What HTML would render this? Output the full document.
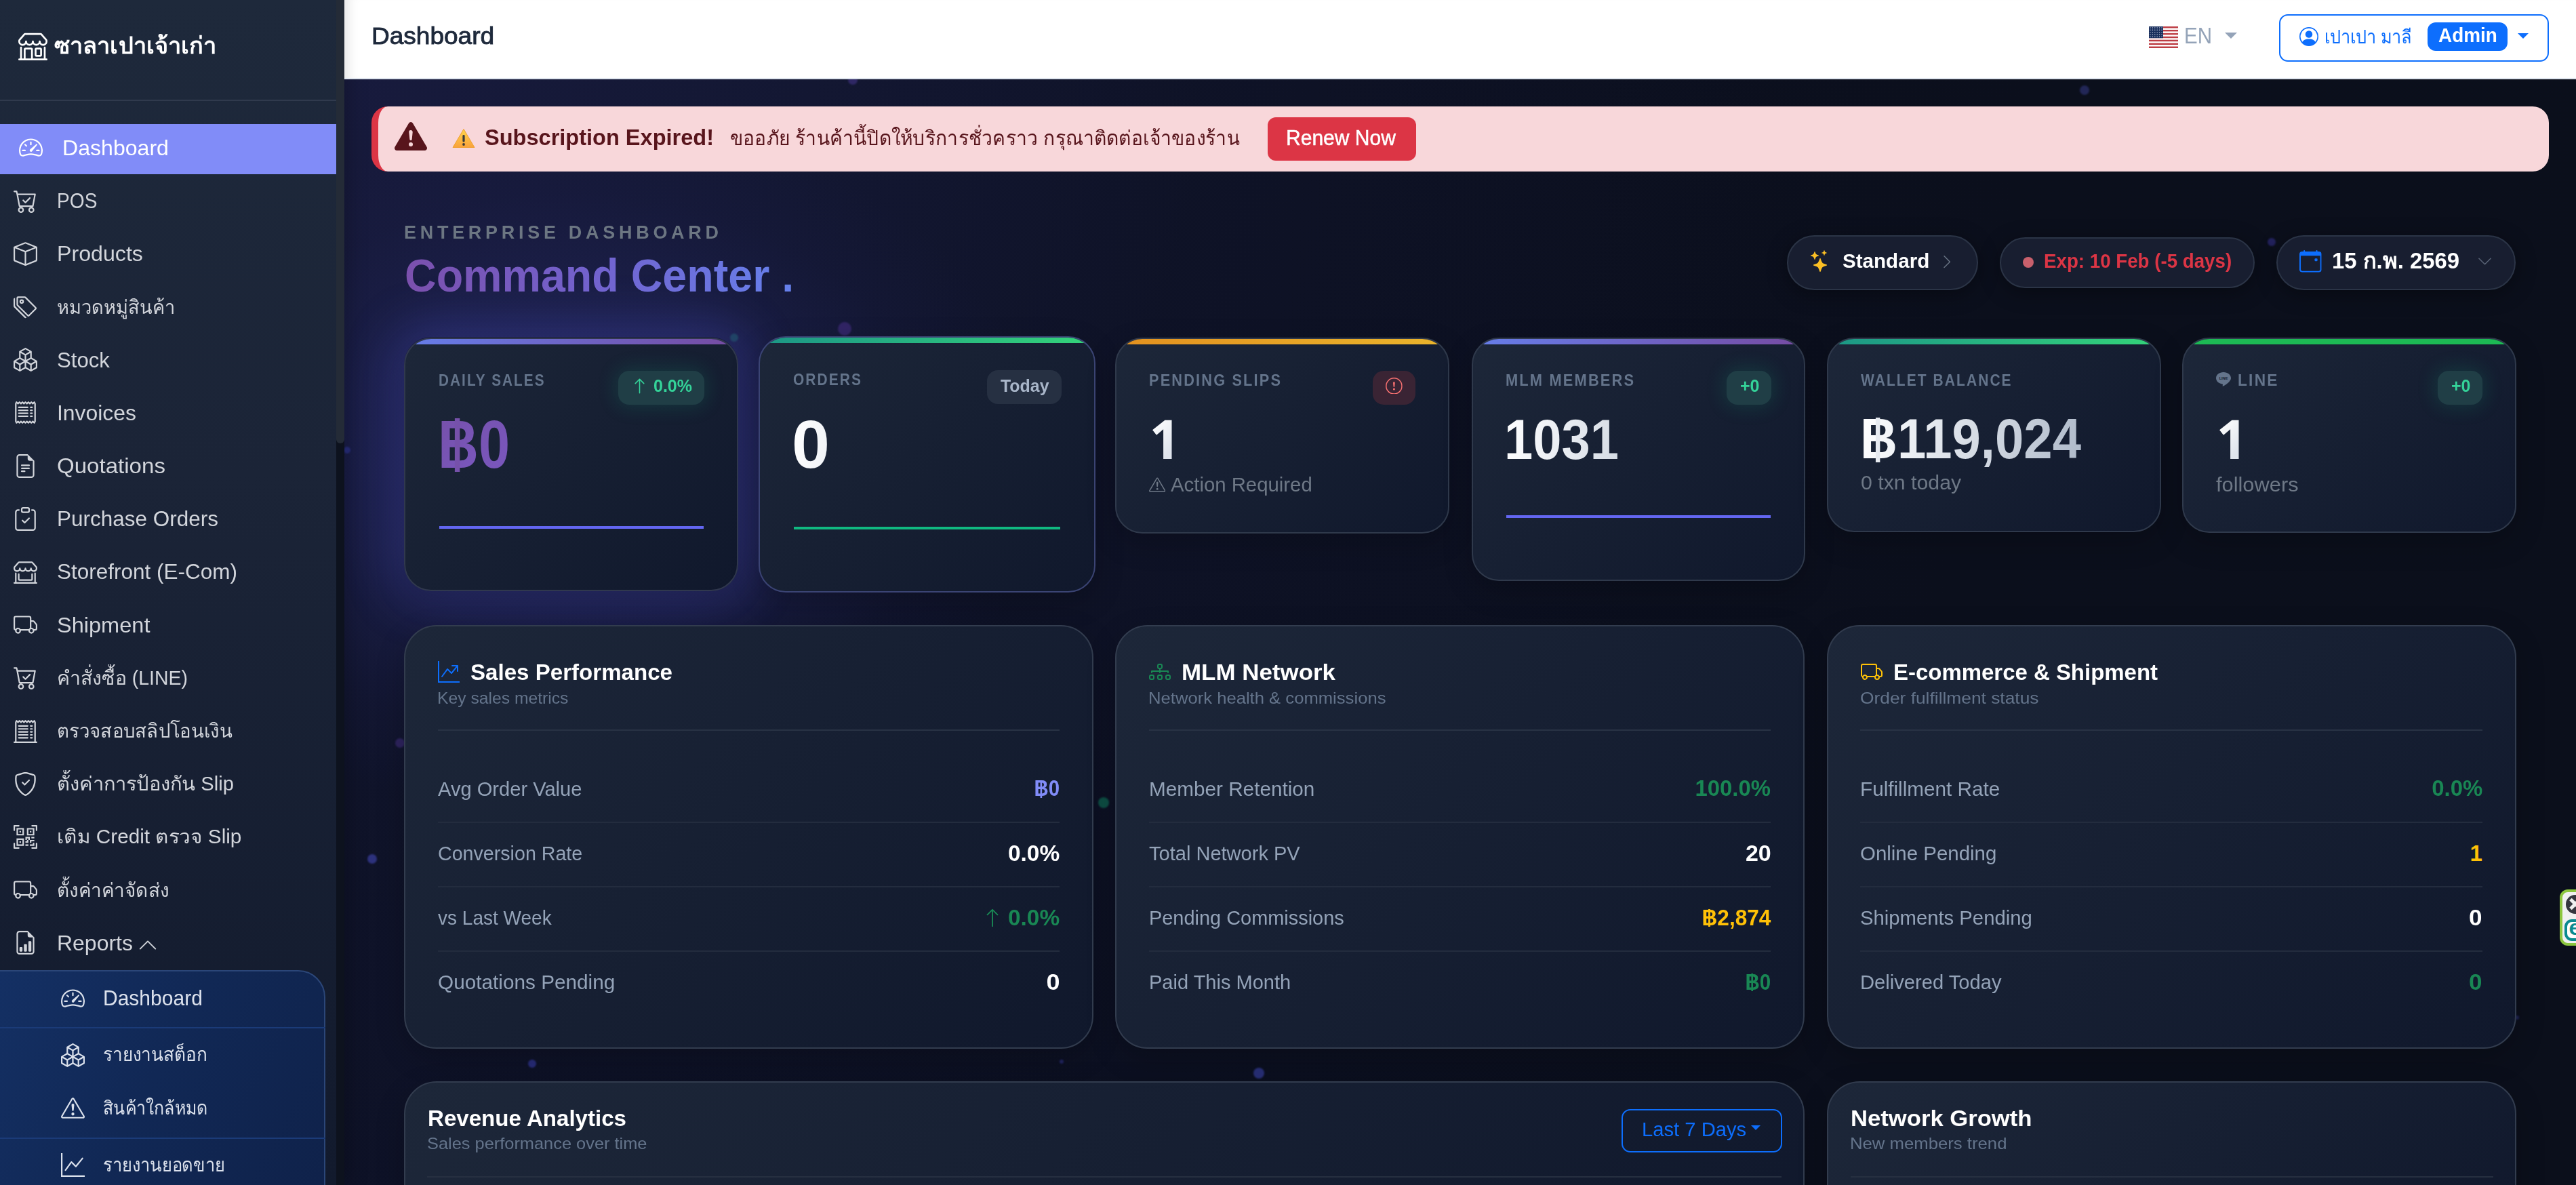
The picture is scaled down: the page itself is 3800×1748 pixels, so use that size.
<!DOCTYPE html>
<html lang="en"><head><meta charset="utf-8"><title>Dashboard</title>
<style>
*{box-sizing:border-box;margin:0;padding:0}
html,body{width:3800px;height:1748px;overflow:hidden;background:#0b0f1c;font-family:"Liberation Sans",sans-serif;color:#fff}
svg{display:block;fill:currentColor}
.abs{position:absolute}
/* ---------- main background ---------- */
#main{position:absolute;left:508px;top:0;width:3292px;height:1748px;overflow:hidden;
 background:radial-gradient(ellipse 700px 520px at 334px 690px,rgba(60,62,160,.30) 0%,rgba(52,54,140,.20) 50%,rgba(40,40,110,.08) 78%,rgba(30,30,84,0) 100%),radial-gradient(ellipse 2100px 1750px at 0% 8%,rgba(24,27,62,.96) 0%,rgba(21,25,55,.8) 30%,rgba(17,21,44,.5) 60%,rgba(11,15,27,0) 100%),linear-gradient(100deg,#0e1228 0%,#0c1021 40%,#0b0f1c 70%,#0b0f1b 100%)}
.dot{position:absolute;border-radius:50%;opacity:.7;filter:blur(1px)}
/* ---------- sidebar ---------- */
#side{position:absolute;left:0;top:0;width:508px;height:1748px;background:linear-gradient(180deg,#1e293b 0%,#1b2437 40%,#121a2d 100%);box-shadow:6px 0 28px rgba(0,0,0,.22);overflow:hidden}
#side .track{position:absolute;left:496px;top:0;width:12px;height:1748px;background:#0d121e}
#side .thumb{position:absolute;left:496px;top:-12px;width:12px;height:666px;border-radius:6px;background:#242b37}
#brand{position:absolute;left:27px;top:46px;height:42px;display:flex;align-items:center;color:#fff;font-weight:700;font-size:38px;white-space:nowrap}
#brand svg{width:43px;height:43px;margin-right:10px}
#side .hr{position:absolute;left:0;top:147px;width:496px;height:2px;background:#303a4d}
.nav{position:absolute;left:0;top:178.9px;width:496px}
.ni{position:relative;height:78.2px;display:flex;align-items:center;color:#d2d5db;font-size:32px;white-space:nowrap}
.ni svg{position:absolute;left:20px;top:50%;width:35px;height:35px;margin-top:-17.5px}
.ni span{position:absolute;left:83.5px;top:50%;line-height:40px;margin-top:-20px}
.ni.act{color:#fff}
.ni.act:before{content:"";position:absolute;left:0;top:4px;width:496px;bottom:0;background:#818cf8}
.ni.act svg{left:28px}
.ni.act span{left:91.5px}
#sub{position:absolute;left:-2px;top:1431px;width:482px;height:400px;border:2px solid #2b4678;border-top-right-radius:40px;background:linear-gradient(120deg,#143064 0%,#112855 45%,#0f2149 100%)}
.si{position:absolute;left:0;width:480px;height:78px;color:#dbe1ec;font-size:30.5px;white-space:nowrap}
.si svg{position:absolute;left:90px;top:50%;width:35px;height:35px;margin-top:-17.5px}
.si span{position:absolute;left:151.5px;top:50%;line-height:40px;margin-top:-20px}
.sl{position:absolute;left:0;width:480px;height:2px;background:#1b3b78}

/* ---------- text + cards ---------- */
.t{position:absolute;line-height:1;white-space:nowrap}
.card{background:linear-gradient(135deg,#1d2739 0%,#172033 45%,#10182c 100%);overflow:hidden;box-shadow:0 14px 44px rgba(0,0,0,.2)}
.card .bar{position:absolute;left:0;top:0;right:0;height:8px}
.baht{position:relative;display:inline-block}
.baht:before{content:"";position:absolute;left:41%;top:.125em;width:.09em;height:.79em;background:currentColor}
.v .baht{background:inherit;-webkit-background-clip:text;background-clip:text}
.v .baht:before{background:#e6eaf0}
.v.pv .baht:before{background:#7651aa}
#top{position:absolute;left:508px;top:0;width:3292px;height:117px;background:#fff;border-bottom:2px solid #dfe5ee;box-shadow:inset 18px 0 16px -12px rgba(0,0,0,.1)}
</style></head><body>
<svg width="0" height="0" style="position:absolute"><defs>
<symbol id="i-speed" viewBox="0 0 16 16"><path d="M8 4a.5.5 0 0 1 .5.5V6a.5.5 0 0 1-1 0V4.500A.5.5 0 0 1 8 4M3.732 5.732a.5.5 0 0 1 .707 0l.915.914a.5.5 0 1 1-.708.708l-.914-.915a.5.5 0 0 1 0-.707M2 10a.5.5 0 0 1 .5-.5h1.586a.5.5 0 0 1 0 1H2.500A.5.5 0 0 1 2 10m9.500 0a.5.5 0 0 1 .5-.5h1.500a.5.5 0 0 1 0 1H12a.5.5 0 0 1-.5-.5m.754-4.246a.39.39 0 0 0-.527-.020L7.547 9.310a.91.91 0 1 0 1.302 1.258l3.434-4.297a.39.39 0 0 0-.029-.518z"/><path fill-rule="evenodd" d="M0 10a8 8 0 1 1 15.547 2.661c-.442 1.253-1.845 1.602-2.932 1.250C11.309 13.488 9.475 13 8 13c-1.474 0-3.310.488-4.615.911-1.087.352-2.490.003-2.932-1.250A8 8 0 0 1 0 10m8-7a7 7 0 0 0-6.603 9.329c.203.575.923.876 1.680.630C4.397 12.533 6.358 12 8 12s3.604.532 4.923.960c.757.245 1.477-.056 1.680-.631A7 7 0 0 0 8 3"/></symbol>
<symbol id="i-cart" viewBox="0 0 16 16"><path d="M11.354 6.354a.5.5 0 0 0-.708-.708L8 8.293 6.854 7.146a.5.5 0 1 0-.708.708l1.500 1.500a.5.5 0 0 0 .708 0z"/><path d="M.5 1a.5.5 0 0 0 0 1h1.110l.401 1.607 1.498 7.985A.5.5 0 0 0 4 12h1a2 2 0 1 0 0 4 2 2 0 0 0 0-4h7a2 2 0 1 0 0 4 2 2 0 0 0 0-4h1a.5.5 0 0 0 .491-.408l1.500-8A.5.5 0 0 0 14.500 3H2.890l-.405-1.621A.5.5 0 0 0 2 1zm3.915 10L3.102 4h10.796l-1.313 7zM6 14a1 1 0 1 1-2 0 1 1 0 0 1 2 0m7 0a1 1 0 1 1-2 0 1 1 0 0 1 2 0"/></symbol>
<symbol id="i-box" viewBox="0 0 16 16"><path d="M8.186 1.113a.5.5 0 0 0-.372 0L1.846 3.500 8 5.961 14.154 3.500zM15 4.239l-6.500 2.600v7.922l6.500-2.600V4.240zM7.500 14.762V6.838L1 4.239v7.923zM7.443.184a1.500 1.500 0 0 1 1.114 0l7.129 2.852A.5.5 0 0 1 16 3.500v8.662a1 1 0 0 1-.629.928l-7.185 2.874a.5.5 0 0 1-.372 0L.630 13.090a1 1 0 0 1-.630-.928V3.500a.5.5 0 0 1 .314-.464z"/></symbol>
<symbol id="i-tags" viewBox="0 0 16 16"><path d="M3 2v4.586l7 7L14.586 9l-7-7zM2 2a1 1 0 0 1 1-1h4.586a1 1 0 0 1 .707.293l7 7a1 1 0 0 1 0 1.414l-4.586 4.586a1 1 0 0 1-1.414 0l-7-7A1 1 0 0 1 2 6.586z"/><path d="M5.500 5a.5.5 0 1 1 0-1 .5.5 0 0 1 0 1m0 1a1.500 1.500 0 1 0 0-3 1.500 1.500 0 0 0 0 3M1 7.086a1 1 0 0 0 .293.707L8.750 15.250l-.043.043a1 1 0 0 1-1.414 0l-7-7A1 1 0 0 1 0 7.586V3a1 1 0 0 1 1-1z"/></symbol>
<symbol id="i-boxes" viewBox="0 0 16 16"><path d="M7.752.066a.5.5 0 0 1 .496 0l3.750 2.143a.5.5 0 0 1 .252.434v3.995l3.498 2A.5.5 0 0 1 16 9.070v4.286a.5.5 0 0 1-.252.434l-3.750 2.143a.5.5 0 0 1-.496 0l-3.502-2-3.502 2.001a.5.5 0 0 1-.496 0l-3.750-2.143A.5.5 0 0 1 0 13.357V9.071a.5.5 0 0 1 .252-.434L3.750 6.638V2.643a.5.5 0 0 1 .252-.434zM4.250 7.504 1.508 9.071l2.742 1.567 2.742-1.567zM7.500 9.933l-2.750 1.571v3.134l2.750-1.571zm1 3.134 2.750 1.571v-3.134L8.500 9.933zm.508-3.996 2.742 1.567 2.742-1.567-2.742-1.567zm2.242-2.433V3.504L8.500 5.076V8.210zM7.500 8.210V5.076L4.750 3.504v3.134zM5.258 2.643 8 4.210l2.742-1.567L8 1.076zM15 9.933l-2.750 1.571v3.134L15 13.067zM3.750 14.638v-3.134L1 9.933v3.134z"/></symbol>
<symbol id="i-receipt" viewBox="0 0 16 16"><path d="M1.920.506a.5.5 0 0 1 .434.140L3 1.293l.646-.647a.5.5 0 0 1 .708 0L5 1.293l.646-.647a.5.5 0 0 1 .708 0L7 1.293l.646-.647a.5.5 0 0 1 .708 0L9 1.293l.646-.647a.5.5 0 0 1 .708 0l.646.647.646-.647a.5.5 0 0 1 .708 0l.646.647.646-.647a.5.5 0 0 1 .801.130l.5 1A.5.5 0 0 1 15 2v12a.5.5 0 0 1-.053.224l-.5 1a.5.5 0 0 1-.8.130L13 14.707l-.646.647a.5.5 0 0 1-.708 0L11 14.707l-.646.647a.5.5 0 0 1-.708 0L9 14.707l-.646.647a.5.5 0 0 1-.708 0L7 14.707l-.646.647a.5.5 0 0 1-.708 0L5 14.707l-.646.647a.5.5 0 0 1-.708 0L3 14.707l-.646.647a.5.5 0 0 1-.801-.130l-.5-1A.5.5 0 0 1 1 14V2a.5.5 0 0 1 .053-.224l.5-1a.5.5 0 0 1 .367-.270m.217 1.338L2 2.118v11.764l.137.274.510-.510a.5.5 0 0 1 .707 0l.646.647.646-.646a.5.5 0 0 1 .708 0l.646.646.646-.646a.5.5 0 0 1 .708 0l.646.646.646-.646a.5.5 0 0 1 .708 0l.646.646.646-.646a.5.5 0 0 1 .708 0l.646.646.646-.646a.5.5 0 0 1 .708 0l.509.509.137-.274V2.118l-.137-.274-.510.510a.5.5 0 0 1-.707 0L12 1.707l-.646.647a.5.5 0 0 1-.708 0L10 1.707l-.646.647a.5.5 0 0 1-.708 0L8 1.707l-.646.647a.5.5 0 0 1-.708 0L6 1.707l-.646.647a.5.5 0 0 1-.708 0L4 1.707l-.646.647a.5.5 0 0 1-.708 0z"/><path d="M3 4.500a.5.5 0 0 1 .5-.5h6a.5.5 0 1 1 0 1h-6a.5.5 0 0 1-.5-.5m0 2a.5.5 0 0 1 .5-.5h6a.5.5 0 1 1 0 1h-6a.5.5 0 0 1-.5-.5m0 2a.5.5 0 0 1 .5-.5h6a.5.5 0 1 1 0 1h-6a.5.5 0 0 1-.5-.5m0 2a.5.5 0 0 1 .5-.5h6a.5.5 0 0 1 0 1h-6a.5.5 0 0 1-.5-.5m8-6a.5.5 0 0 1 .5-.5h1a.5.5 0 0 1 0 1h-1a.5.5 0 0 1-.5-.5m0 2a.5.5 0 0 1 .5-.5h1a.5.5 0 0 1 0 1h-1a.5.5 0 0 1-.5-.5m0 2a.5.5 0 0 1 .5-.5h1a.5.5 0 0 1 0 1h-1a.5.5 0 0 1-.5-.5m0 2a.5.5 0 0 1 .5-.5h1a.5.5 0 0 1 0 1h-1a.5.5 0 0 1-.5-.5"/></symbol>
<symbol id="i-rcut" viewBox="0 0 16 16"><path d="M3 4.500a.5.5 0 0 1 .5-.5h6a.5.5 0 1 1 0 1h-6a.5.5 0 0 1-.5-.5m0 2a.5.5 0 0 1 .5-.5h6a.5.5 0 1 1 0 1h-6a.5.5 0 0 1-.5-.5m0 2a.5.5 0 0 1 .5-.5h6a.5.5 0 1 1 0 1h-6a.5.5 0 0 1-.5-.5m0 2a.5.5 0 0 1 .5-.5h6a.5.5 0 0 1 0 1h-6a.5.5 0 0 1-.5-.5m0 2a.5.5 0 0 1 .5-.5h6a.5.5 0 0 1 0 1h-6a.5.5 0 0 1-.5-.5M11.500 4a.5.5 0 0 0 0 1h1a.5.5 0 0 0 0-1zm0 2a.5.5 0 0 0 0 1h1a.5.5 0 0 0 0-1zm0 2a.5.5 0 0 0 0 1h1a.5.5 0 0 0 0-1zm0 2a.5.5 0 0 0 0 1h1a.5.5 0 0 0 0-1zm0 2a.5.5 0 0 0 0 1h1a.5.5 0 0 0 0-1z"/><path d="M2.354.646a.5.5 0 0 0-.801.130l-.5 1A.5.5 0 0 0 1 2v13H.5a.5.5 0 0 0 0 1h15a.5.5 0 0 0 0-1H15V2a.5.5 0 0 0-.053-.224l-.5-1a.5.5 0 0 0-.8-.130L13 1.293l-.646-.647a.5.5 0 0 0-.708 0L11 1.293l-.646-.647a.5.5 0 0 0-.708 0L9 1.293 8.354.646a.5.5 0 0 0-.708 0L7 1.293 6.354.646a.5.5 0 0 0-.708 0L5 1.293 4.354.646a.5.5 0 0 0-.708 0L3 1.293zm-.217 1.198.510.510a.5.5 0 0 0 .707 0L4 1.707l.646.647a.5.5 0 0 0 .708 0L6 1.707l.646.647a.5.5 0 0 0 .708 0L8 1.707l.646.647a.5.5 0 0 0 .708 0L10 1.707l.646.647a.5.5 0 0 0 .708 0L12 1.707l.646.647a.5.5 0 0 0 .708 0l.509-.510.137.274V15H2V2.118z"/></symbol>
<symbol id="i-file" viewBox="0 0 16 16"><path d="M5.500 7a.5.5 0 0 0 0 1h5a.5.5 0 0 0 0-1zM5 9.500a.5.5 0 0 1 .5-.5h5a.5.5 0 0 1 0 1h-5a.5.5 0 0 1-.5-.5m0 2a.5.5 0 0 1 .5-.5h2a.5.5 0 0 1 0 1h-2a.5.5 0 0 1-.5-.5"/><path d="M9.500 0H4a2 2 0 0 0-2 2v12a2 2 0 0 0 2 2h8a2 2 0 0 0 2-2V4.500zm0 1v2A1.500 1.500 0 0 0 11 4.500h2V14a1 1 0 0 1-1 1H4a1 1 0 0 1-1-1V2a1 1 0 0 1 1-1z"/></symbol>
<symbol id="i-clip" viewBox="0 0 16 16"><path fill-rule="evenodd" d="M10.854 7.146a.5.5 0 0 1 0 .708l-3 3a.5.5 0 0 1-.708 0l-1.500-1.500a.5.5 0 1 1 .708-.708L7.500 9.793l2.646-2.647a.5.5 0 0 1 .708 0"/><path d="M4 1.500H3a2 2 0 0 0-2 2V14a2 2 0 0 0 2 2h10a2 2 0 0 0 2-2V3.500a2 2 0 0 0-2-2h-1v1h1a1 1 0 0 1 1 1V14a1 1 0 0 1-1 1H3a1 1 0 0 1-1-1V3.500a1 1 0 0 1 1-1h1z"/><path d="M9.500 1a.5.5 0 0 1 .5.5v1a.5.5 0 0 1-.5.5h-3a.5.5 0 0 1-.5-.5v-1a.5.5 0 0 1 .5-.5zm-3-1A1.500 1.500 0 0 0 5 1.500v1A1.500 1.500 0 0 0 6.500 4h3A1.500 1.500 0 0 0 11 2.500v-1A1.500 1.500 0 0 0 9.500 0z"/></symbol>
<symbol id="i-shop" viewBox="0 0 16 16"><path d="M2.970 1.350A1 1 0 0 1 3.730 1h8.540a1 1 0 0 1 .760.350l2.609 3.044A1.500 1.500 0 0 1 16 5.370v.255a2.375 2.375 0 0 1-4.250 1.458A2.370 2.370 0 0 1 9.875 8 2.370 2.370 0 0 1 8 7.083 2.370 2.370 0 0 1 6.125 8a2.370 2.370 0 0 1-1.875-.917A2.375 2.375 0 0 1 0 5.625V5.370a1.500 1.500 0 0 1 .361-.976zm1.780 4.275a1.375 1.375 0 0 0 2.750 0 .5.5 0 0 1 1 0 1.375 1.375 0 0 0 2.750 0 .5.5 0 0 1 1 0 1.375 1.375 0 1 0 2.750 0V5.370a.5.5 0 0 0-.120-.325L12.270 2H3.730L1.120 5.045A.5.5 0 0 0 1 5.370v.255a1.375 1.375 0 0 0 2.750 0 .5.5 0 0 1 1 0M1.500 8.500A.5.5 0 0 1 2 9v6h1v-5a1 1 0 0 1 1-1h3a1 1 0 0 1 1 1v5h6V9a.5.5 0 0 1 1 0v6h.5a.5.5 0 0 1 0 1H.5a.5.5 0 0 1 0-1H1V9a.5.5 0 0 1 .5-.5M4 15h3v-5H4zm5-5a1 1 0 0 1 1-1h2a1 1 0 0 1 1 1v3a1 1 0 0 1-1 1h-2a1 1 0 0 1-1-1zm3 0h-2v3h2z"/></symbol>
<symbol id="i-shopw" viewBox="0 0 16 16"><path d="M2.970 1.350A1 1 0 0 1 3.730 1h8.540a1 1 0 0 1 .760.350l2.609 3.044A1.500 1.500 0 0 1 16 5.370v.255a2.375 2.375 0 0 1-4.250 1.458A2.370 2.370 0 0 1 9.875 8 2.370 2.370 0 0 1 8 7.083 2.370 2.370 0 0 1 6.125 8a2.370 2.370 0 0 1-1.875-.917A2.375 2.375 0 0 1 0 5.625V5.370a1.500 1.500 0 0 1 .361-.976zm1.780 4.275a1.375 1.375 0 0 0 2.750 0 .5.5 0 0 1 1 0 1.375 1.375 0 0 0 2.750 0 .5.5 0 0 1 1 0 1.375 1.375 0 1 0 2.750 0V5.370a.5.5 0 0 0-.120-.325L12.270 2H3.730L1.120 5.045A.5.5 0 0 0 1 5.370v.255a1.375 1.375 0 0 0 2.750 0 .5.5 0 0 1 1 0M1.500 8.500A.5.5 0 0 1 2 9v6h12V9a.5.5 0 0 1 1 0v6h.5a.5.5 0 0 1 0 1H.5a.5.5 0 0 1 0-1H1V9a.5.5 0 0 1 .5-.5m2 .5a.5.5 0 0 1 .5.5V13h8V9.500a.5.5 0 0 1 1 0V13a1 1 0 0 1-1 1H4a1 1 0 0 1-1-1V9.500a.5.5 0 0 1 .5-.5"/></symbol>
<symbol id="i-truck" viewBox="0 0 16 16"><path d="M0 3.500A1.500 1.500 0 0 1 1.500 2h9A1.500 1.500 0 0 1 12 3.500V5h1.020a1.500 1.500 0 0 1 1.170.563l1.481 1.850a1.500 1.500 0 0 1 .329.938V10.500a1.500 1.500 0 0 1-1.500 1.500H14a2 2 0 1 1-4 0H5a2 2 0 1 1-3.998-.085A1.500 1.500 0 0 1 0 10.500zm1.294 7.456A2 2 0 0 1 4.732 11h5.536a2 2 0 0 1 .732-.732V3.500a.5.5 0 0 0-.5-.5h-9a.5.5 0 0 0-.5.5v7a.5.5 0 0 0 .294.456M12 10a2 2 0 0 1 1.732 1h.768a.5.5 0 0 0 .5-.5V8.350a.5.5 0 0 0-.110-.312l-1.480-1.850A.5.5 0 0 0 13.020 6H12zm-9 1a1 1 0 1 0 0 2 1 1 0 0 0 0-2m9 0a1 1 0 1 0 0 2 1 1 0 0 0 0-2"/></symbol>
<symbol id="i-shield" viewBox="0 0 16 16"><path d="M5.338 1.590a61 61 0 0 0-2.837.856.48.48 0 0 0-.328.390c-.554 4.157.726 7.190 2.253 9.188a10.700 10.700 0 0 0 2.287 2.233c.346.244.652.420.893.533q.180.085.293.118a1 1 0 0 0 .101.025 1 1 0 0 0 .1-.025q.114-.034.294-.118c.240-.113.547-.290.893-.533a10.700 10.700 0 0 0 2.287-2.233c1.527-1.997 2.807-5.031 2.253-9.188a.48.48 0 0 0-.328-.390c-.651-.213-1.750-.560-2.837-.855C9.552 1.290 8.531 1.067 8 1.067c-.530 0-1.552.223-2.662.524zM5.072.560C6.157.265 7.310 0 8 0s1.843.265 2.928.560c1.110.300 2.229.655 2.887.870a1.540 1.540 0 0 1 1.044 1.262c.596 4.477-.787 7.795-2.465 9.990a11.800 11.800 0 0 1-2.517 2.453 7 7 0 0 1-1.048.625c-.280.132-.581.240-.829.240s-.548-.108-.829-.240a7 7 0 0 1-1.048-.625 11.800 11.800 0 0 1-2.517-2.453C1.928 10.487.545 7.169 1.141 2.692A1.540 1.540 0 0 1 2.185 1.430 63 63 0 0 1 5.072.560"/><path d="M10.854 5.146a.5.5 0 0 1 0 .708l-3 3a.5.5 0 0 1-.708 0l-1.500-1.500a.5.5 0 1 1 .708-.708L7.500 7.793l2.646-2.647a.5.5 0 0 1 .708 0"/></symbol>
<symbol id="i-qr" viewBox="0 0 16 16"><path d="M0 .5A.5.5 0 0 1 .5 0h3a.5.5 0 0 1 0 1H1v2.500a.5.5 0 0 1-1 0zm12 0a.5.5 0 0 1 .5-.5h3a.5.5 0 0 1 .5.5v3a.5.5 0 0 1-1 0V1h-2.500a.5.5 0 0 1-.5-.5M.5 12a.5.5 0 0 1 .5.5V15h2.500a.5.5 0 0 1 0 1h-3a.5.5 0 0 1-.5-.5v-3a.5.5 0 0 1 .5-.5m15 0a.5.5 0 0 1 .5.5v3a.5.5 0 0 1-.5.5h-3a.5.5 0 0 1 0-1H15v-2.500a.5.5 0 0 1 .5-.5M4 4h1v1H4z"/><path d="M7 2H2v5h5zM3 3h3v3H3zm2 8H4v1h1z"/><path d="M7 9H2v5h5zm-4 1h3v3H3zm8-6h1v1h-1z"/><path d="M9 2h5v5H9zm1 1v3h3V3zM8 8v2h1v1H8v1h2v-2h1v2h1v-1h2v-1h-3V8zm2 2H9V9h1zm4 2h-1v1h-2v1h3zm-4 2v-1H8v1z"/><path d="M12 9h2V8h-2z"/></symbol>
<symbol id="i-fbar" viewBox="0 0 16 16"><path d="M10 13.500a.5.5 0 0 0 .5.5h1a.5.5 0 0 0 .5-.5v-6a.5.5 0 0 0-.5-.5h-1a.5.5 0 0 0-.5.5zm-2.500.5a.5.5 0 0 1-.5-.5v-4a.5.5 0 0 1 .5-.5h1a.5.5 0 0 1 .5.5v4a.5.5 0 0 1-.5.5zm-3 0a.5.5 0 0 1-.5-.5v-2a.5.5 0 0 1 .5-.5h1a.5.5 0 0 1 .5.5v2a.5.5 0 0 1-.5.5z"/><path d="M14 14V4.500L9.500 0H4a2 2 0 0 0-2 2v12a2 2 0 0 0 2 2h8a2 2 0 0 0 2-2M9.500 3A1.500 1.500 0 0 0 11 4.500h2V14a1 1 0 0 1-1 1H4a1 1 0 0 1-1-1V2a1 1 0 0 1 1-1h5.500z"/></symbol>
<symbol id="i-chup" viewBox="0 0 16 16"><path fill-rule="evenodd" d="M7.646 4.646a.5.5 0 0 1 .708 0l6 6a.5.5 0 0 1-.708.708L8 5.707l-5.646 5.647a.5.5 0 0 1-.708-.708z"/></symbol>
<symbol id="i-chdn" viewBox="0 0 16 16"><path fill-rule="evenodd" d="M1.646 4.646a.5.5 0 0 1 .708 0L8 10.293l5.646-5.647a.5.5 0 0 1 .708.708l-6 6a.5.5 0 0 1-.708 0l-6-6a.5.5 0 0 1 0-.708"/></symbol>
<symbol id="i-chrt" viewBox="0 0 16 16"><path fill-rule="evenodd" d="M4.646 1.646a.5.5 0 0 1 .708 0l6 6a.5.5 0 0 1 0 .708l-6 6a.5.5 0 0 1-.708-.708L10.293 8 4.646 2.354a.5.5 0 0 1 0-.708"/></symbol>
<symbol id="i-warn" viewBox="0 0 16 16"><path d="M7.938 2.016A.13.13 0 0 1 8.002 2a.13.13 0 0 1 .063.016.15.15 0 0 1 .054.057l6.857 11.667c.036.060.035.124.002.183a.2.2 0 0 1-.054.060.1.1 0 0 1-.066.017H1.146a.1.1 0 0 1-.066-.017.2.2 0 0 1-.054-.060.18.18 0 0 1 .002-.183L7.884 2.073a.15.15 0 0 1 .054-.057m1.044-.450a1.130 1.130 0 0 0-1.960 0L.165 13.233c-.457.778.091 1.767.980 1.767h13.713c.889 0 1.438-.990.980-1.767z"/><path d="M7.002 12a1 1 0 1 1 2 0 1 1 0 0 1-2 0M7.100 5.995a.905.905 0 1 1 1.800 0l-.350 3.507a.552.552 0 0 1-1.100 0z"/></symbol>
<symbol id="i-warnf" viewBox="0 0 16 16"><path d="M8.982 1.566a1.130 1.130 0 0 0-1.960 0L.165 13.233c-.457.778.091 1.767.980 1.767h13.713c.889 0 1.438-.990.980-1.767zM8 5c.535 0 .954.462.900.995l-.350 3.507a.552.552 0 0 1-1.100 0L7.100 5.995A.905.905 0 0 1 8 5m.002 6a1 1 0 1 1 0 2 1 1 0 0 1 0-2"/></symbol>
<symbol id="i-graph" viewBox="0 0 16 16"><path fill-rule="evenodd" d="M0 0h1v15h15v1H0zm14.817 3.113a.5.5 0 0 1 .070.704l-4.500 5.500a.5.5 0 0 1-.740.037L7.060 6.767l-3.656 5.027a.5.5 0 0 1-.808-.588l4-5.500a.5.5 0 0 1 .758-.060l2.609 2.610 4.150-5.073a.5.5 0 0 1 .704-.070"/></symbol>
<symbol id="i-grapha" viewBox="0 0 16 16"><path fill-rule="evenodd" d="M0 0h1v15h15v1H0zm10 3.500a.5.5 0 0 1 .5-.5h4a.5.5 0 0 1 .5.5v4a.5.5 0 0 1-1 0V4.900l-3.613 4.417a.5.5 0 0 1-.740.037L7.060 6.767l-3.656 5.027a.5.5 0 0 1-.808-.588l4-5.500a.5.5 0 0 1 .758-.060l2.609 2.610L13.445 4H10.500a.5.5 0 0 1-.5-.5"/></symbol>
<symbol id="i-diag" viewBox="0 0 16 16"><path fill-rule="evenodd" d="M6 3.500A1.500 1.500 0 0 1 7.500 2h1A1.500 1.500 0 0 1 10 3.500v1A1.500 1.500 0 0 1 8.500 6v1H14a.5.5 0 0 1 .5.5v1a.5.5 0 0 1-1 0V8h-5v.5a.5.5 0 0 1-1 0V8h-5v.5a.5.5 0 0 1-1 0v-1A.5.5 0 0 1 2 7h5.500V6A1.500 1.500 0 0 1 6 4.500zM8.500 5a.5.5 0 0 0 .5-.5v-1a.5.5 0 0 0-.5-.5h-1a.5.5 0 0 0-.5.5v1a.5.5 0 0 0 .5.5zM0 11.500A1.500 1.500 0 0 1 1.500 10h1A1.500 1.500 0 0 1 4 11.500v1A1.500 1.500 0 0 1 2.500 14h-1A1.500 1.500 0 0 1 0 12.500zm1.500-.5a.5.5 0 0 0-.5.5v1a.5.5 0 0 0 .5.5h1a.5.5 0 0 0 .5-.5v-1a.5.5 0 0 0-.5-.5zm4.500.5A1.500 1.500 0 0 1 7.500 10h1a1.500 1.500 0 0 1 1.500 1.500v1A1.500 1.500 0 0 1 8.500 14h-1A1.500 1.500 0 0 1 6 12.500zm1.500-.5a.5.5 0 0 0-.5.5v1a.5.5 0 0 0 .5.5h1a.5.5 0 0 0 .5-.5v-1a.5.5 0 0 0-.5-.5zm4.500.5a1.500 1.500 0 0 1 1.500-1.500h1a1.500 1.500 0 0 1 1.500 1.500v1a1.500 1.500 0 0 1-1.500 1.500h-1a1.500 1.500 0 0 1-1.500-1.500zm1.500-.5a.5.5 0 0 0-.5.5v1a.5.5 0 0 0 .5.5h1a.5.5 0 0 0 .5-.5v-1a.5.5 0 0 0-.5-.5z"/></symbol>
<symbol id="i-person" viewBox="0 0 16 16"><path d="M11 6a3 3 0 1 1-6 0 3 3 0 0 1 6 0"/><path fill-rule="evenodd" d="M0 8a8 8 0 1 1 16 0A8 8 0 0 1 0 8m8-7a7 7 0 0 0-5.468 11.370C3.242 11.226 4.805 10 8 10s4.757 1.225 5.468 2.370A7 7 0 0 0 8 1"/></symbol>
<symbol id="i-cal" viewBox="0 0 16 16"><path d="M11 6.500a.5.5 0 0 1 .5-.5h1a.5.5 0 0 1 .5.5v1a.5.5 0 0 1-.5.5h-1a.5.5 0 0 1-.5-.5z"/><path d="M3.500 0a.5.5 0 0 1 .5.5V1h8V.5a.5.5 0 0 1 1 0V1h1a2 2 0 0 1 2 2v11a2 2 0 0 1-2 2H2a2 2 0 0 1-2-2V3a2 2 0 0 1 2-2h1V.5a.5.5 0 0 1 .5-.5M1 4v10a1 1 0 0 0 1 1h12a1 1 0 0 0 1-1V4z"/></symbol>
<symbol id="i-stars" viewBox="0 0 16 16"><path d="M7.657 6.247c.110-.330.576-.330.686 0l.645 1.937a2.890 2.890 0 0 0 1.829 1.828l1.936.645c.330.110.330.576 0 .686l-1.937.645a2.890 2.890 0 0 0-1.828 1.829l-.645 1.936a.361.361 0 0 1-.686 0l-.645-1.937a2.890 2.890 0 0 0-1.828-1.828l-1.937-.645a.361.361 0 0 1 0-.686l1.937-.645a2.890 2.890 0 0 0 1.828-1.828zM3.794 1.148a.217.217 0 0 1 .412 0l.387 1.162c.173.518.579.924 1.097 1.097l1.162.387a.217.217 0 0 1 0 .412l-1.162.387A1.730 1.730 0 0 0 4.593 5.690l-.387 1.162a.217.217 0 0 1-.412 0L3.407 5.690A1.730 1.730 0 0 0 2.310 4.593l-1.162-.387a.217.217 0 0 1 0-.412l1.162-.387A1.730 1.730 0 0 0 3.407 2.310zM10.863.099a.145.145 0 0 1 .274 0l.258.774c.115.346.386.617.732.732l.774.258a.145.145 0 0 1 0 .274l-.774.258a1.160 1.160 0 0 0-.732.732l-.258.774a.145.145 0 0 1-.274 0l-.258-.774a1.160 1.160 0 0 0-.732-.732L9.100 2.137a.145.145 0 0 1 0-.274l.774-.258c.346-.115.617-.386.732-.732z"/></symbol>
<symbol id="i-excl" viewBox="0 0 16 16"><path d="M8 15A7 7 0 1 1 8 1a7 7 0 0 1 0 14m0 1A8 8 0 1 0 8 0a8 8 0 0 0 0 16"/><path d="M7.002 11a1 1 0 1 1 2 0 1 1 0 0 1-2 0M7.100 4.995a.905.905 0 1 1 1.800 0l-.350 3.507a.552.552 0 0 1-1.100 0z"/></symbol>
<symbol id="i-up" viewBox="0 0 16 16"><path fill-rule="evenodd" d="M8 15a.5.5 0 0 0 .5-.5V2.707l3.146 3.147a.5.5 0 0 0 .708-.708l-4-4a.5.5 0 0 0-.708 0l-4 4a.5.5 0 1 0 .708.708L7.500 2.707V14.500a.5.5 0 0 0 .5.5"/></symbol>
</defs></svg>
<!--MAIN--><div id="main">
<div class="dot" style="left:743px;top:111px;width:14px;height:14px;background:#3b2f7a"></div>
<div class="dot" style="left:2560px;top:126px;width:14px;height:14px;background:#2c3170"></div>
<div class="dot" style="left:569px;top:492px;width:12px;height:12px;background:#1b5560"></div>
<div class="dot" style="left:728px;top:475px;width:20px;height:20px;background:#3d2a78"></div>
<div class="dot" style="left:-1px;top:659px;width:10px;height:10px;background:#2e3590"></div>
<div class="dot" style="left:75px;top:1089px;width:14px;height:14px;background:#3a2a72"></div>
<div class="dot" style="left:1112px;top:1176px;width:16px;height:16px;background:#0f6b55"></div>
<div class="dot" style="left:34px;top:1260px;width:14px;height:14px;background:#3a3fa0"></div>
<div class="dot" style="left:271px;top:1563px;width:12px;height:12px;background:#33389a"></div>
<div class="dot" style="left:1055px;top:1563px;width:6px;height:6px;background:#2a2e7a"></div>
<div class="dot" style="left:1341px;top:1575px;width:16px;height:16px;background:#353d9c"></div>
<div class="dot" style="left:2837px;top:351px;width:12px;height:12px;background:#2d2a78"></div>
<div class="dot" style="left:3202px;top:1498px;width:6px;height:6px;background:#262a6a"></div>
<div class="abs" style="left:88px;top:497px;width:493px;height:375px;border-radius:40px;box-shadow:0 0 70px 14px rgba(74,78,190,.42)"></div>
<div class="abs" style="left:40px;top:157px;width:3212px;height:96px;background:#f8d7da;border-left:10px solid #dc3545;border-radius:24px"></div>
<svg class="abs" style="left:74px;top:177px;width:48px;height:48px;color:#58151c;"><use href="#i-warnf"/></svg>
<svg class="abs" style="left:159px;top:189px;width:34px;height:30px" viewBox="0 0 34 30"><defs><linearGradient id="wg" x1="0" y1="0" x2="0" y2="1"><stop offset="0" stop-color="#ffd54a"/><stop offset="1" stop-color="#f9a23c"/></linearGradient></defs><path d="M17 1.500 33 28.500H1z" fill="url(#wg)" stroke="#f0a030" stroke-width="1" stroke-linejoin="round"/><rect x="15.400" y="10" width="3.200" height="10.500" rx="1.400" fill="#3a3a3a"/><circle cx="17" cy="24" r="1.900" fill="#3a3a3a"/></svg>
<div id="t1" class="t" style="left:207px;top:185.72px;font-size:33.4px;color:#58151c;font-weight:700;transform:scaleX(0.9743);transform-origin:left center;">Subscription Expired!</div>
<div id="t2" class="t" style="left:569px;top:189.02px;font-size:29.5px;color:#58151c;transform:scaleX(0.9584);transform-origin:left center;max-width:788.6px;overflow:hidden;height:44.2px;line-height:44.2px;margin-top:-7.4px;">ขออภัย ร้านค้านี้ปิดให้บริการชั่วคราว กรุณาติดต่อเจ้าของร้าน</div>
<div class="abs" style="left:1361.5px;top:172.5px;width:219px;height:64px;background:#dc3545;border-radius:12px"></div>
<div id="t3" class="t" style="left:1389px;top:188.25px;font-size:31px;color:#fff;-webkit-text-stroke:.5px #fff;transform:scaleX(0.9685);transform-origin:left center;">Renew Now</div>
<div id="t4" class="t" style="left:87.6px;top:328.34px;font-size:28.3px;color:#6c7682;font-weight:700;letter-spacing:6px;transform:scaleX(0.9535);transform-origin:left center;">ENTERPRISE DASHBOARD</div>
<div id="t5" class="t" style="left:88.9px;top:372.28px;font-size:69px;color:#7a5cc4;font-weight:700;background:linear-gradient(90deg,#7b50ad 0%,#7263cf 50%,#6681ec 100%);-webkit-background-clip:text;background-clip:text;-webkit-text-fill-color:transparent;padding-bottom:14px;transform:scaleX(0.9360);transform-origin:left center;">Command Center .</div>
<div class="abs" style="left:2128px;top:346.6px;width:282px;height:81.4px;background:#181e30;border:2px solid #2b3446;border-radius:41px;box-shadow:0 6px 30px rgba(0,0,0,.35);"></div>
<svg class="abs" style="left:2161px;top:369px;width:32px;height:32px;color:#fbbf24;"><use href="#i-stars"/></svg>
<div id="t6" class="t" style="left:2210px;top:370.95px;font-size:29px;color:#fff;font-weight:700;transform:scaleX(1.0203);transform-origin:left center;">Standard</div>
<svg class="abs" style="left:2352.7px;top:374.9px;width:22.4px;height:22.4px;color:#6b7686;"><use href="#i-chrt"/></svg>
<div class="abs" style="left:2442px;top:350px;width:375.5px;height:74.6px;background:#181e30;border:2px solid #2b3446;border-radius:38px;box-shadow:0 6px 30px rgba(0,0,0,.35);"></div>
<div class="abs" style="left:2475.6px;top:379px;width:16px;height:16px;background:#c8606c;border-radius:50%"></div>
<div id="t7" class="t" style="left:2507px;top:370.65px;font-size:29px;color:#dc3545;font-weight:700;transform:scaleX(0.9553);transform-origin:left center;">Exp: 10 Feb (-5 days)</div>
<div class="abs" style="left:2850px;top:346.6px;width:353.4px;height:81.4px;background:#181e30;border:2px solid #2b3446;border-radius:41px;box-shadow:0 6px 30px rgba(0,0,0,.35);"></div>
<svg class="abs" style="left:2884px;top:369px;width:32.7px;height:32.7px;color:#0d6efd;"><use href="#i-cal"/></svg>
<div id="t8" class="t" style="left:2931.8px;top:368.06px;font-size:33px;color:#fff;font-weight:700;transform:scaleX(0.9957);transform-origin:left center;max-width:192.8px;overflow:hidden;height:49.5px;line-height:49.5px;margin-top:-8.2px;">15 ก.พ. 2569</div>
<svg class="abs" style="left:3146px;top:373.5px;width:23px;height:23px;color:#5b6678;"><use href="#i-chdn"/></svg>
<div class="abs card" style="left:88px;top:497.5px;width:493px;height:374.5px;border:2px solid #30384e;border-radius:40px;"><div class="bar" style="background:linear-gradient(90deg,#667eea,#764ba2)"></div></div>
<div class="abs card" style="left:611px;top:495.5px;width:497px;height:378.5px;border:2px solid #3b4474;border-radius:40px;"><div class="bar" style="background:linear-gradient(90deg,#1c9686,#34d47a)"></div></div>
<div class="abs card" style="left:1137.2px;top:497.5px;width:492.4px;height:289px;border:2px solid #2f394b;border-radius:40px;"><div class="bar" style="background:linear-gradient(90deg,#e3911f,#eab52c)"></div></div>
<div class="abs card" style="left:1662.5px;top:497.5px;width:492.4px;height:359px;border:2px solid #2f394b;border-radius:40px;"><div class="bar" style="background:linear-gradient(90deg,#667eea,#764ba2)"></div></div>
<div class="abs card" style="left:2187.2px;top:497.5px;width:492.4px;height:287.3px;border:2px solid #2f394b;border-radius:40px;"><div class="bar" style="background:linear-gradient(90deg,#1c9686,#34d47a)"></div></div>
<div class="abs card" style="left:2711.3px;top:497.5px;width:492.4px;height:288.7px;border:2px solid #2f394b;border-radius:40px;"><div class="bar" style="background:#1db954"></div></div>
<div id="t9" class="t" style="left:139px;top:549.66px;font-size:23.2px;color:#64748b;font-weight:700;letter-spacing:2.3px;transform:scaleX(0.8956);transform-origin:left center;">DAILY SALES</div>
<div id="t10" class="t" style="left:661.7px;top:549.36px;font-size:23.2px;color:#64748b;font-weight:700;letter-spacing:2.3px;transform:scaleX(0.9025);transform-origin:left center;">ORDERS</div>
<div id="t11" class="t" style="left:1187.3px;top:549.66px;font-size:23.2px;color:#64748b;font-weight:700;letter-spacing:2.3px;transform:scaleX(0.9382);transform-origin:left center;">PENDING SLIPS</div>
<div id="t12" class="t" style="left:1712.8px;top:549.66px;font-size:23.2px;color:#64748b;font-weight:700;letter-spacing:2.3px;transform:scaleX(0.9420);transform-origin:left center;">MLM MEMBERS</div>
<div id="t13" class="t" style="left:2237px;top:549.66px;font-size:23.2px;color:#64748b;font-weight:700;letter-spacing:2.3px;transform:scaleX(0.9045);transform-origin:left center;">WALLET BALANCE</div>
<div id="t14" class="t" style="left:2793.3px;top:549.66px;font-size:23.2px;color:#64748b;font-weight:700;letter-spacing:2.3px;transform:scaleX(0.9784);transform-origin:left center;">LINE</div>
<svg class="abs" style="left:2760px;top:548px;width:24px;height:24px" viewBox="0 0 24 24"><path d="M12 1C5.900 1 1 4.900 1 9.800c0 4.300 3.800 7.900 9 8.600.400.100.800.200.900.500.100.300.100.700 0 1l-.200 1c0 .300-.200 1.100 1 .600s6.300-3.700 8.600-6.300c1.600-1.700 2.700-3.500 2.700-5.400C23 4.900 18.100 1 12 1z" fill="#64748b"/><text x="12" y="12.300" font-family="Liberation Sans" font-weight="700" font-size="5.600" fill="#151c30" text-anchor="middle">LINE</text></svg>
<div class="abs" style="left:404px;top:547px;width:127px;height:50px;background:#203e46;border-radius:16px;box-shadow:0 0 28px 4px rgba(16,185,129,.16);"></div>
<svg class="abs" style="left:423px;top:556.5px;width:25px;height:25px;color:#34d399;"><use href="#i-up"/></svg>
<div id="t15" class="t" style="left:455.5px;top:556.52px;font-size:25.6px;color:#34d399;font-weight:700;transform:scaleX(0.9776);transform-origin:left center;">0.0%</div>
<div class="abs" style="left:948px;top:546px;width:109.6px;height:50px;background:#263042;border-radius:16px;"></div>
<div id="t16" class="t" style="left:967.6px;top:556.52px;font-size:25.6px;color:#a9b6c9;font-weight:700;transform:scaleX(0.9735);transform-origin:left center;">Today</div>
<div class="abs" style="left:1516.8px;top:547px;width:63.2px;height:50px;background:#3a2434;border-radius:16px;"></div>
<svg class="abs" style="left:1536px;top:556.6px;width:24.8px;height:24.8px;color:#f87171;"><use href="#i-excl"/></svg>
<div class="abs" style="left:2038.7px;top:547px;width:66.7px;height:50px;background:#203e46;border-radius:16px;box-shadow:0 0 28px 4px rgba(16,185,129,.16);"></div>
<div id="t17" class="t" style="left:2058.6px;top:556.52px;font-size:25.6px;color:#34d399;font-weight:700;transform:scaleX(0.9777);transform-origin:left center;">+0</div>
<div class="abs" style="left:3088px;top:547px;width:66px;height:50px;background:#203e46;border-radius:16px;box-shadow:0 0 28px 4px rgba(16,185,129,.16);"></div>
<div id="t18" class="t" style="left:3107.5px;top:556.52px;font-size:25.6px;color:#34d399;font-weight:700;transform:scaleX(0.9777);transform-origin:left center;">+0</div>
<div id="t19" class="t v pv" style="left:138px;top:604.83px;font-size:100px;color:#7853b0;font-weight:700;background:linear-gradient(135deg,#7650a8 0%,#7a58c0 100%);-webkit-background-clip:text;background-clip:text;-webkit-text-fill-color:transparent;padding:12px 4px 20px 0;margin-top:-12px;transform:scaleX(0.8291);transform-origin:left center;"><span class="baht">B</span>0</div>
<div id="t20" class="t v" style="left:660px;top:604.93px;font-size:100px;color:#fff;font-weight:700;background:linear-gradient(100deg,#ffffff 0px,#f4f6f9 50px,#a8b4c5 400px);-webkit-background-clip:text;background-clip:text;-webkit-text-fill-color:transparent;padding:0 4px 20px 0;transform:scaleX(1.0067);transform-origin:left center;">0</div>
<svg class="abs" style="left:1191px;top:618px;width:32px;height:61px" viewBox="0 0 32 61"><defs><linearGradient id="og1699" x1="0" y1="0" x2=".6" y2="1"><stop offset="0" stop-color="#ffffff"/><stop offset="1" stop-color="#dfe4ec"/></linearGradient></defs><path d="M19.400 1.800H29.500V59H17.100V15.300L7 23.800 1.100 16.200z" fill="url(#og1699)"/></svg>
<div id="t21" class="t v" style="left:1711px;top:607.32px;font-size:83px;color:#fff;font-weight:700;background:linear-gradient(100deg,#ffffff 0px,#f4f6f9 50px,#a8b4c5 400px);-webkit-background-clip:text;background-clip:text;-webkit-text-fill-color:transparent;padding:0 4px 20px 0;transform:scaleX(0.9151);transform-origin:left center;">1031</div>
<div id="t22" class="t v" style="left:2235.5px;top:605.72px;font-size:83px;color:#fff;font-weight:700;background:linear-gradient(100deg,#ffffff 0px,#f4f6f9 50px,#a8b4c5 400px);-webkit-background-clip:text;background-clip:text;-webkit-text-fill-color:transparent;padding:12px 4px 20px 0;margin-top:-12px;transform:scaleX(0.9172);transform-origin:left center;"><span class="baht">B</span>119,024</div>
<svg class="abs" style="left:2765px;top:618px;width:32px;height:61px" viewBox="0 0 32 61"><defs><linearGradient id="og3273" x1="0" y1="0" x2=".6" y2="1"><stop offset="0" stop-color="#ffffff"/><stop offset="1" stop-color="#dfe4ec"/></linearGradient></defs><path d="M19.400 1.800H29.500V59H17.100V15.300L7 23.800 1.100 16.200z" fill="url(#og3273)"/></svg>
<svg class="abs" style="left:1186.7px;top:702.5px;width:24.4px;height:24.4px;color:#6e7886;"><use href="#i-warn"/></svg>
<div id="t23" class="t" style="left:1218.5px;top:700.53px;font-size:28.9px;color:#6e7886;transform:scaleX(1.0154);transform-origin:left center;">Action Required</div>
<div id="t24" class="t" style="left:2237px;top:697.53px;font-size:28.9px;color:#6e7886;transform:scaleX(1.0480);transform-origin:left center;">0 txn today</div>
<div id="t25" class="t" style="left:2761px;top:700.53px;font-size:28.9px;color:#6e7886;transform:scaleX(1.0661);transform-origin:left center;">followers</div>
<div class="abs" style="left:139.8px;top:776px;width:390.2px;height:4.4px;background:#6366f1"></div>
<div class="abs" style="left:662.8px;top:776.6px;width:393.7px;height:4.4px;background:#10b981"></div>
<div class="abs" style="left:1713.9px;top:759.6px;width:389.7px;height:4.4px;background:#6366f1"></div>
<div class="abs card" style="left:88px;top:921.5px;width:1017px;height:625px;border:2px solid #323c4e;border-radius:48px;"></div>
<svg class="abs" style="left:138px;top:975px;width:32px;height:32px;color:#0d6efd;"><use href="#i-grapha"/></svg>
<div id="t26" class="t" style="left:186px;top:975.09px;font-size:33.2px;color:#fff;font-weight:700;transform:scaleX(0.9971);transform-origin:left center;">Sales Performance</div>
<div id="t27" class="t" style="left:137px;top:1018.26px;font-size:24.5px;color:#64748b;transform:scaleX(1.0078);transform-origin:left center;">Key sales metrics</div>
<div class="abs" style="left:137.8px;top:1076px;width:917.4px;height:2px;background:#283244"></div>
<div id="t28" class="t" style="left:137.6px;top:1149.5px;font-size:28.7px;color:#94a3b8;transform:scaleX(1.0143);transform-origin:left center;">Avg Order Value</div>
<div id="t29" class="t" style="right:2236.8px;top:1146.46px;font-size:33px;color:#818cf8;font-weight:700;transform:scaleX(0.8905);transform-origin:right center;"><span class="baht">B</span>0</div>
<div class="abs" style="left:137.8px;top:1211.8px;width:917.4px;height:2px;background:#232c3e"></div>
<div id="t30" class="t" style="left:137.6px;top:1244.7px;font-size:28.7px;color:#94a3b8;transform:scaleX(0.9979);transform-origin:left center;">Conversion Rate</div>
<div id="t31" class="t" style="right:2236.8px;top:1241.66px;font-size:33px;color:#fff;font-weight:700;transform:scaleX(1.0141);transform-origin:right center;">0.0%</div>
<div class="abs" style="left:137.8px;top:1307.0px;width:917.4px;height:2px;background:#232c3e"></div>
<div id="t32" class="t" style="left:137.6px;top:1339.9px;font-size:28.7px;color:#94a3b8;transform:scaleX(0.9770);transform-origin:left center;">vs Last Week</div>
<div id="t33" class="t" style="right:2236.8px;top:1336.86px;font-size:33px;color:#198754;font-weight:700;transform:scaleX(1.0141);transform-origin:right center;">0.0%</div>
<svg class="abs" style="left:940.5px;top:1339.2px;width:30px;height:30px;color:#198754;"><use href="#i-up"/></svg>
<div class="abs" style="left:137.8px;top:1402.2px;width:917.4px;height:2px;background:#232c3e"></div>
<div id="t34" class="t" style="left:137.6px;top:1435.1px;font-size:28.7px;color:#94a3b8;transform:scaleX(1.0370);transform-origin:left center;">Quotations Pending</div>
<div id="t35" class="t" style="right:2236.8px;top:1432.06px;font-size:33px;color:#fff;font-weight:700;transform:scaleX(1.0883);transform-origin:right center;">0</div>
<div class="abs card" style="left:1137.2px;top:921.5px;width:1017px;height:625px;border:2px solid #323c4e;border-radius:48px;"></div>
<svg class="abs" style="left:1187.2px;top:975px;width:32px;height:32px;color:#198754;"><use href="#i-diag"/></svg>
<div id="t36" class="t" style="left:1235.2px;top:975.09px;font-size:33.2px;color:#fff;font-weight:700;transform:scaleX(1.0523);transform-origin:left center;">MLM Network</div>
<div id="t37" class="t" style="left:1186.2px;top:1018.26px;font-size:24.5px;color:#64748b;transform:scaleX(1.0463);transform-origin:left center;">Network health &amp; commissions</div>
<div class="abs" style="left:1187.0px;top:1076px;width:917.4px;height:2px;background:#283244"></div>
<div id="t38" class="t" style="left:1186.8px;top:1149.5px;font-size:28.7px;color:#94a3b8;transform:scaleX(1.0353);transform-origin:left center;">Member Retention</div>
<div id="t39" class="t" style="right:1187.6px;top:1146.46px;font-size:33px;color:#198754;font-weight:700;transform:scaleX(0.9959);transform-origin:right center;">100.0%</div>
<div class="abs" style="left:1187.0px;top:1211.8px;width:917.4px;height:2px;background:#232c3e"></div>
<div id="t40" class="t" style="left:1186.8px;top:1244.7px;font-size:28.7px;color:#94a3b8;transform:scaleX(1.0123);transform-origin:left center;">Total Network PV</div>
<div id="t41" class="t" style="right:1187.6px;top:1241.66px;font-size:33px;color:#fff;font-weight:700;transform:scaleX(1.0289);transform-origin:right center;">20</div>
<div class="abs" style="left:1187.0px;top:1307.0px;width:917.4px;height:2px;background:#232c3e"></div>
<div id="t42" class="t" style="left:1186.8px;top:1339.9px;font-size:28.7px;color:#94a3b8;transform:scaleX(1.0081);transform-origin:left center;">Pending Commissions</div>
<div id="t43" class="t" style="right:1187.6px;top:1336.86px;font-size:33px;color:#ffc107;font-weight:700;transform:scaleX(0.9581);transform-origin:right center;"><span class="baht">B</span>2,874</div>
<div class="abs" style="left:1187.0px;top:1402.2px;width:917.4px;height:2px;background:#232c3e"></div>
<div id="t44" class="t" style="left:1186.8px;top:1435.1px;font-size:28.7px;color:#94a3b8;transform:scaleX(1.0119);transform-origin:left center;">Paid This Month</div>
<div id="t45" class="t" style="right:1187.6px;top:1432.06px;font-size:33px;color:#198754;font-weight:700;transform:scaleX(0.8952);transform-origin:right center;"><span class="baht">B</span>0</div>
<div class="abs card" style="left:2186.6px;top:921.5px;width:1017px;height:625px;border:2px solid #323c4e;border-radius:48px;"></div>
<svg class="abs" style="left:2236.6px;top:975px;width:32px;height:32px;color:#ffc107;"><use href="#i-truck"/></svg>
<div id="t46" class="t" style="left:2284.6px;top:975.09px;font-size:33.2px;color:#fff;font-weight:700;transform:scaleX(0.9928);transform-origin:left center;">E-commerce &amp; Shipment</div>
<div id="t47" class="t" style="left:2235.6px;top:1018.26px;font-size:24.5px;color:#64748b;transform:scaleX(1.0750);transform-origin:left center;">Order fulfillment status</div>
<div class="abs" style="left:2236.4px;top:1076px;width:917.4px;height:2px;background:#283244"></div>
<div id="t48" class="t" style="left:2236.2px;top:1149.5px;font-size:28.7px;color:#94a3b8;transform:scaleX(1.0352);transform-origin:left center;">Fulfillment Rate</div>
<div id="t49" class="t" style="right:138.2px;top:1146.46px;font-size:33px;color:#198754;font-weight:700;transform:scaleX(0.9968);transform-origin:right center;">0.0%</div>
<div class="abs" style="left:2236.4px;top:1211.8px;width:917.4px;height:2px;background:#232c3e"></div>
<div id="t50" class="t" style="left:2236.2px;top:1244.7px;font-size:28.7px;color:#94a3b8;transform:scaleX(1.0262);transform-origin:left center;">Online Pending</div>
<div id="t51" class="t" style="right:138.2px;top:1241.66px;font-size:33px;color:#ffc107;font-weight:700;">1</div>
<div class="abs" style="left:2236.4px;top:1307.0px;width:917.4px;height:2px;background:#232c3e"></div>
<div id="t52" class="t" style="left:2236.2px;top:1339.9px;font-size:28.7px;color:#94a3b8;transform:scaleX(1.0198);transform-origin:left center;">Shipments Pending</div>
<div id="t53" class="t" style="right:138.2px;top:1336.86px;font-size:33px;color:#fff;font-weight:700;transform:scaleX(1.0610);transform-origin:right center;">0</div>
<div class="abs" style="left:2236.4px;top:1402.2px;width:917.4px;height:2px;background:#232c3e"></div>
<div id="t54" class="t" style="left:2236.2px;top:1435.1px;font-size:28.7px;color:#94a3b8;transform:scaleX(1.0163);transform-origin:left center;">Delivered Today</div>
<div id="t55" class="t" style="right:138.2px;top:1432.06px;font-size:33px;color:#198754;font-weight:700;transform:scaleX(1.0610);transform-origin:right center;">0</div>
<div class="abs card" style="left:88px;top:1594.8px;width:2066px;height:300px;border:2px solid #323c4e;border-radius:48px;"></div>
<div id="t56" class="t" style="left:122.5px;top:1632.89px;font-size:33.2px;color:#fff;font-weight:700;transform:scaleX(0.9969);transform-origin:left center;">Revenue Analytics</div>
<div id="t57" class="t" style="left:122px;top:1674.86px;font-size:24.5px;color:#64748b;transform:scaleX(1.0360);transform-origin:left center;">Sales performance over time</div>
<div class="abs" style="left:122.4px;top:1735px;width:1997.2px;height:2px;background:#262f40"></div>
<div class="abs" style="left:1884px;top:1636px;width:236.7px;height:64.2px;border:2px solid #0d6efd;border-radius:13px"></div>
<div id="t58" class="t" style="left:1914px;top:1651.19px;font-size:29.3px;color:#0d6efd;transform:scaleX(0.9965);transform-origin:left center;">Last 7 Days</div>
<div class="abs" style="left:2075.3px;top:1660.1px;width:0px;height:0px;border-left:7.85px solid transparent;border-right:7.85px solid transparent;border-top:7.8px solid #0d6efd"></div>
<div class="abs card" style="left:2186.6px;top:1594.8px;width:1017px;height:300px;border:2px solid #323c4e;border-radius:48px;"></div>
<div id="t59" class="t" style="left:2221.5px;top:1632.89px;font-size:33.2px;color:#fff;font-weight:700;transform:scaleX(1.0437);transform-origin:left center;">Network Growth</div>
<div id="t60" class="t" style="left:2221px;top:1674.86px;font-size:24.5px;color:#64748b;transform:scaleX(1.0494);transform-origin:left center;">New members trend</div>
<div class="abs" style="left:2221.5px;top:1735px;width:948px;height:2px;background:#262f40"></div>
<div class="abs" style="left:3268px;top:1311.7px;width:40px;height:83px;background:#f0f0f0;border:4px solid #8cc63f;border-radius:12px"><div class="abs" style="left:5px;top:4px;width:28px;height:28px;border-radius:50%;background:#35363f"></div><div class="abs" style="left:9px;top:15.5px;width:20px;height:5px;background:#f0f0f0;transform:rotate(45deg)"></div><div class="abs" style="left:9px;top:15.5px;width:20px;height:5px;background:#f0f0f0;transform:rotate(-45deg)"></div><div class="abs" style="left:3px;top:40px;width:36px;height:32px;border:4px solid #0a8a8f;border-radius:11px;background:#fff"></div><div class="abs" style="left:9.5px;top:36px;font-size:32px;font-weight:700;color:#0a8a8f;line-height:1">e</div></div>
</div>
<!--MAIN-END-->
<!--SIDE--><div id="side">
<div class="track"></div><div class="thumb"></div>
<div id="brand"><svg><use href="#i-shop"/></svg><span id="s1" style="font-size:34.2px;max-width:241.7px;overflow:hidden;transform:scaleX(1.0054);transform-origin:left center">ซาลาเปาเจ้าเก่า</span></div>
<div class="hr"></div>
<div class="nav">
<div class="ni act"><svg><use href="#i-speed"/></svg><span id="s2" style="transform:scaleX(1.0024);transform-origin:left center">Dashboard</span></div>
<div class="ni"><svg><use href="#i-cart"/></svg><span id="s3" style="transform:scaleX(0.8793);transform-origin:left center">POS</span></div>
<div class="ni"><svg><use href="#i-box"/></svg><span id="s4" style="transform:scaleX(1.0051);transform-origin:left center">Products</span></div>
<div class="ni"><svg><use href="#i-tags"/></svg><span id="s5" style="font-size:28.8px;max-width:188.0px;overflow:hidden;transform:scaleX(0.9452);transform-origin:left center">หมวดหมู่สินค้า</span></div>
<div class="ni"><svg><use href="#i-boxes"/></svg><span id="s6" style="transform:scaleX(0.9736);transform-origin:left center">Stock</span></div>
<div class="ni"><svg><use href="#i-receipt"/></svg><span id="s7" style="transform:scaleX(0.9960);transform-origin:left center">Invoices</span></div>
<div class="ni"><svg><use href="#i-file"/></svg><span id="s8" style="transform:scaleX(1.0333);transform-origin:left center">Quotations</span></div>
<div class="ni"><svg><use href="#i-clip"/></svg><span id="s9" style="transform:scaleX(0.9836);transform-origin:left center">Purchase Orders</span></div>
<div class="ni"><svg><use href="#i-shopw"/></svg><span id="s10" style="transform:scaleX(0.9839);transform-origin:left center">Storefront (E-Com)</span></div>
<div class="ni"><svg><use href="#i-truck"/></svg><span id="s11" style="transform:scaleX(1.0165);transform-origin:left center">Shipment</span></div>
<div class="ni"><svg><use href="#i-cart"/></svg><span id="s12" style="font-size:28.8px;max-width:199.3px;overflow:hidden;transform:scaleX(0.9883);transform-origin:left center">คำสั่งซื้อ (LINE)</span></div>
<div class="ni"><svg><use href="#i-rcut"/></svg><span id="s13" style="font-size:28.8px;max-width:274.0px;overflow:hidden;transform:scaleX(0.9590);transform-origin:left center">ตรวจสอบสลิปโอนเงิน</span></div>
<div class="ni"><svg><use href="#i-shield"/></svg><span id="s14" style="font-size:28.8px;max-width:262.1px;overflow:hidden;transform:scaleX(1.0112);transform-origin:left center">ตั้งค่าการป้องกัน Slip</span></div>
<div class="ni"><svg><use href="#i-qr"/></svg><span id="s15" style="font-size:28.8px;max-width:268.0px;overflow:hidden;transform:scaleX(1.0325);transform-origin:left center">เติม Credit ตรวจ Slip</span></div>
<div class="ni"><svg><use href="#i-truck"/></svg><span id="s16" style="font-size:28.8px;max-width:175.0px;overflow:hidden;transform:scaleX(0.9703);transform-origin:left center">ตั้งค่าค่าจัดส่ง</span></div>
<div class="ni"><svg><use href="#i-fbar"/></svg><span id="s17" style="transform:scaleX(0.9989);transform-origin:left center">Reports</span></div>
</div>
<svg class="abs" style="left:203px;top:1379px;width:30px;height:30px;color:#d2d5db"><use href="#i-chup"/></svg>
<div id="sub">
<div class="si" style="top:0px"><svg><use href="#i-speed"/></svg><span id="s18" style="transform:scaleX(0.9840);transform-origin:left center">Dashboard</span></div>
<div class="si" style="top:84px"><svg><use href="#i-boxes"/></svg><span id="s19" style="font-size:27.4px;max-width:165.1px;overflow:hidden;transform:scaleX(0.9555);transform-origin:left center">รายงานสต็อก</span></div>
<div class="si" style="top:162.5px"><svg><use href="#i-warn"/></svg><span id="s20" style="font-size:27.4px;max-width:174.0px;overflow:hidden;transform:scaleX(0.9108);transform-origin:left center">สินค้าใกล้หมด</span></div>
<div class="si" style="top:246.5px"><svg><use href="#i-graph"/></svg><span id="s21" style="font-size:27.4px;max-width:197.0px;overflow:hidden;transform:scaleX(0.9318);transform-origin:left center">รายงานยอดขาย</span></div>
<div class="sl" style="top:82px"></div><div class="sl" style="top:244.5px"></div>
</div>
</div>
<!--SIDE-END-->
<!--TOP--><div id="top">
<div id="t61" class="t" style="left:40px;top:35.86px;font-size:35.6px;color:#1e293b;-webkit-text-stroke:.9px #1e293b;transform:scaleX(1.0406);transform-origin:left center;">Dashboard</div>
<svg class="abs" style="left:2662px;top:39px;width:43px;height:32px" viewBox="0 0 43 32"><rect width="43" height="32" fill="#fff"/><rect y="0.00" width="43" height="2.460" fill="#bd3d44"/><rect y="4.92" width="43" height="2.460" fill="#bd3d44"/><rect y="9.84" width="43" height="2.460" fill="#bd3d44"/><rect y="14.76" width="43" height="2.460" fill="#bd3d44"/><rect y="19.68" width="43" height="2.460" fill="#bd3d44"/><rect y="24.60" width="43" height="2.460" fill="#bd3d44"/><rect y="29.52" width="43" height="2.460" fill="#bd3d44"/><rect width="21" height="17.200" fill="#192f5d"/><g fill="#c9cfe0"><circle cx="2.0" cy="2.0" r=".7"/><circle cx="5.4" cy="2.0" r=".7"/><circle cx="8.8" cy="2.0" r=".7"/><circle cx="12.2" cy="2.0" r=".7"/><circle cx="15.6" cy="2.0" r=".7"/><circle cx="19.0" cy="2.0" r=".7"/><circle cx="2.0" cy="5.3" r=".7"/><circle cx="5.4" cy="5.3" r=".7"/><circle cx="8.8" cy="5.3" r=".7"/><circle cx="12.2" cy="5.3" r=".7"/><circle cx="15.6" cy="5.3" r=".7"/><circle cx="19.0" cy="5.3" r=".7"/><circle cx="2.0" cy="8.6" r=".7"/><circle cx="5.4" cy="8.6" r=".7"/><circle cx="8.8" cy="8.6" r=".7"/><circle cx="12.2" cy="8.6" r=".7"/><circle cx="15.6" cy="8.6" r=".7"/><circle cx="19.0" cy="8.6" r=".7"/><circle cx="2.0" cy="11.9" r=".7"/><circle cx="5.4" cy="11.9" r=".7"/><circle cx="8.8" cy="11.9" r=".7"/><circle cx="12.2" cy="11.9" r=".7"/><circle cx="15.6" cy="11.9" r=".7"/><circle cx="19.0" cy="11.9" r=".7"/><circle cx="2.0" cy="15.2" r=".7"/><circle cx="5.4" cy="15.2" r=".7"/><circle cx="8.8" cy="15.2" r=".7"/><circle cx="12.2" cy="15.2" r=".7"/><circle cx="15.6" cy="15.2" r=".7"/><circle cx="19.0" cy="15.2" r=".7"/></g></svg>
<div id="t62" class="t" style="left:2713.6px;top:37.23px;font-size:32.8px;color:#94a3b8;transform:scaleX(0.8992);transform-origin:left center;">EN</div>
<div class="abs" style="left:2774px;top:48px;width:0px;height:0px;border-left:9px solid transparent;border-right:9px solid transparent;border-top:9px solid #94a3b8"></div>
<div class="abs" style="left:2854px;top:21px;width:398px;height:69.5px;border:2px solid #0d6efd;border-radius:13px"></div>
<svg class="abs" style="left:2884px;top:40px;width:28px;height:28px;color:#0d6efd;"><use href="#i-person"/></svg>
<div id="t63" class="t" style="left:2921px;top:40.72px;font-size:27.5px;color:#0d6efd;transform:scaleX(0.9213);transform-origin:left center;max-width:143.8px;overflow:hidden;height:41.2px;line-height:41.2px;margin-top:-6.9px;">เปาเปา มาลี</div>
<div class="abs" style="left:3073px;top:33px;width:118px;height:42px;background:#0d6efd;border-radius:12px"></div>
<div id="t64" class="t" style="left:3089px;top:37.44px;font-size:29.6px;color:#fff;font-weight:700;transform:scaleX(0.9426);transform-origin:left center;">Admin</div>
<div class="abs" style="left:3206px;top:48.5px;width:0px;height:0px;border-left:8.500px solid transparent;border-right:8.500px solid transparent;border-top:8.500px solid #0d6efd"></div>
</div>
<!--TOP-END-->
</body></html>
